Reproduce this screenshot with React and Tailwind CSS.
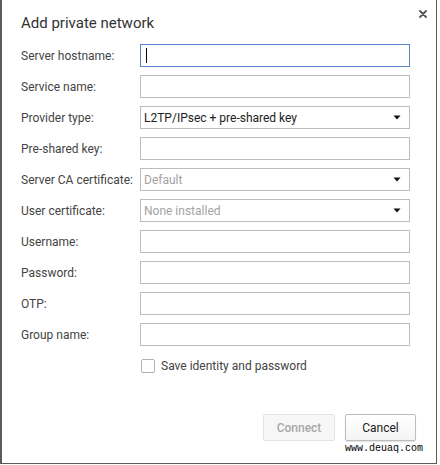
import React from 'react';

const fields = [
  { label: 'Server hostname:', kind: 'input', focused: true },
  { label: 'Service name:', kind: 'input' },
  { label: 'Provider type:', kind: 'select', value: 'L2TP/IPsec + pre-shared key' },
  { label: 'Pre-shared key:', kind: 'input' },
  { label: 'Server CA certificate:', kind: 'select', value: 'Default', muted: true },
  { label: 'User certificate:', kind: 'select', value: 'None installed', muted: true },
  { label: 'Username:', kind: 'input' },
  { label: 'Password:', kind: 'input' },
  { label: 'OTP:', kind: 'input' },
  { label: 'Group name:', kind: 'input' },
];

function Arrow() {
  return (
    <svg width="8" height="5" viewBox="0 0 8 5" className="shrink-0">
      <path d="M0.5 0.5h7L4 4.5z" fill="#111" />
    </svg>
  );
}

function Field({ field }) {
  if (field.kind === 'select') {
    return (
      <div className="w-[270px] h-[23px] border border-[#bdbdbd] bg-white flex items-center justify-between pl-[3px] pr-[8px]">
        <span className={`text-[12px] ${field.muted ? 'text-[#a3a3a3]' : 'text-[#222]'}`}>{field.value}</span>
        <Arrow />
      </div>
    );
  }
  return (
    <div
      className={`w-[270px] h-[23px] border bg-white flex items-center pl-[5px] ${
        field.focused ? 'border-[#5b86c9]' : 'border-[#bdbdbd]'
      }`}
    >
      {field.focused && <span className="w-[1px] h-[15px] bg-black" />}
    </div>
  );
}

export default function App() {
  return (
    <div className="w-[440px] h-[465px] bg-white font-['Roboto',sans-serif]">
      <div className="relative w-[437px] h-[464px] border-l-2 border-r border-b border-[#5c5c5c] flex flex-col">
        {/* Header */}
        <div className="pl-[19px] pt-[13px] h-[44px] text-[15px] leading-[20px] text-[#333]">
          Add private network
        </div>
        <button type="button" className="absolute top-[9px] right-[8px] w-[10px] h-[10px] flex items-center justify-center" aria-label="Close">
          <svg width="8" height="8" viewBox="0 0 8 8">
            <path d="M1 1l6 6M7 1L1 7" stroke="#555" strokeWidth="1.8" strokeLinecap="round" />
          </svg>
        </button>

        {/* Form rows */}
        <div className="flex flex-col gap-[8px] pl-[19px]">
          {fields.map((f) => (
            <div key={f.label} className="flex items-center h-[23px]">
              <span className="w-[119px] text-[12px] text-[#444]">{f.label}</span>
              <Field field={f} />
            </div>
          ))}
        </div>

        {/* Checkbox */}
        <div className="flex items-center gap-[6px] pl-[139px] mt-[11px]">
          <span className="w-[14px] h-[14px] rounded-[2px] border border-[#b0b0b0] bg-white" />
          <span className="text-[12px] text-[#444]">Save identity and password</span>
        </div>

        {/* Buttons */}
        <div className="mt-auto mb-[22px] flex justify-end gap-[10px] pr-[20px]">
          <button type="button" className="w-[72px] h-[27px] rounded-[2px] border border-[#e3e3e3] bg-[#f7f7f7] text-[12px] font-medium text-[#a8a8a8]">
            Connect
          </button>
          <button type="button" className="w-[71px] h-[27px] rounded-[2px] border border-[#bcbcbc] bg-gradient-to-b from-white to-[#f4f4f4] shadow-[0_1px_1px_rgba(0,0,0,0.12)] text-[12px] text-[#222]">
            Cancel
          </button>
        </div>

        <span className="absolute right-[13px] bottom-[8px] text-[10px] leading-[12px] text-black font-['Liberation_Mono',monospace]">
          www.deuaq.com
        </span>
      </div>
    </div>
  );
}
